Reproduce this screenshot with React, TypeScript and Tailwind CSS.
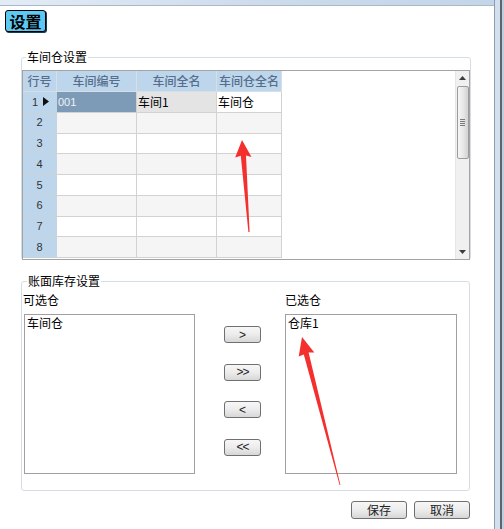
import React from 'react';

const rows = [1, 2, 3, 4, 5, 6, 7, 8];

const WinButton = ({ label, className = '' }: { label: string; className?: string }) => (
  <div
    className={`flex items-center justify-center rounded-[3px] border border-[#707070] bg-linear-to-b from-[#f7f7f7] via-[#ececec] to-[#d7d7d7] text-[12px] leading-none text-[#222] ${className}`}
  >
    {label}
  </div>
);

const Arrows = () => (
  <svg className="pointer-events-none absolute inset-0" width="504" height="529" viewBox="0 0 504 529">
    <polygon
      fill="#f4302e"
      points="242,140 251.5,157 246,155.5 249.6,232 248.4,232 240.8,155.8 235.2,157.6"
    />
    <polygon
      fill="#f4302e"
      points="302,337 314.3,352.4 308.6,352.6 340.4,485 339.6,485 303.8,354.6 298.7,356.4"
    />
  </svg>
);

const Scrollbar = () => (
  <div className="flex w-[14px] flex-col items-center border-l border-[#e6e6e6] bg-[#f0f0f0]">
    <svg className="mt-[5px]" width="7" height="4" viewBox="0 0 7 4">
      <polygon points="3.5,0 7,4 0,4" fill="#3c3c3c" />
    </svg>
    <div className="mt-[6px] flex h-[73px] w-[12px] items-center justify-center rounded-[2px] border border-[#9c9c9c] bg-linear-to-r from-[#f5f5f5] via-[#e8e8e8] to-[#d2d2d2]">
      <div className="flex flex-col gap-[1px]">
        <div className="h-px w-[5px] bg-[#7a7a7a]" />
        <div className="h-px w-[5px] bg-[#7a7a7a]" />
        <div className="h-px w-[5px] bg-[#7a7a7a]" />
        <div className="h-px w-[5px] bg-[#7a7a7a]" />
      </div>
    </div>
    <div className="flex-1" />
    <svg className="mb-[5px]" width="7" height="4" viewBox="0 0 7 4">
      <polygon points="0,0 7,0 3.5,4" fill="#3c3c3c" />
    </svg>
  </div>
);

const Grid = () => (
  <div className="flex h-[190px] w-[448px] border border-[#a3a3a3] bg-white">
    <div className="flex flex-col">
      <div className="flex h-[21px] text-[12px] font-medium text-[#566e8c]">
        <div className="flex w-[34px] items-center justify-center border-r border-b border-[#d6dfe8] bg-[#bdd6eb]">行号</div>
        <div className="flex w-[80px] items-center justify-center border-r border-b border-[#d6dfe8] bg-[#bdd6eb]">车间编号</div>
        <div className="flex w-[80px] items-center justify-center border-r border-b border-[#d6dfe8] bg-[#bdd6eb]">车间全名</div>
        <div className="flex w-[65px] items-center justify-center border-r border-b border-[#d6dfe8] bg-[#bdd6eb]">车间仓全名</div>
      </div>
      {rows.map((n) => {
        const even = n % 2 === 0;
        const rowBg = even ? 'bg-[#f5f5f5]' : 'bg-white';
        return (
          <div key={n} className="flex h-[20.75px] text-[12px]">
            <div className="flex w-[34px] items-center justify-center border-r border-b border-[#c9d3dc] bg-[#bdd6eb] font-['Liberation_Sans',sans-serif] text-[11px] text-[#333]">
              {n === 1 ? (
                <span className="flex items-center gap-[5px] pl-[2px]">
                  1
                  <svg width="6" height="9" viewBox="0 0 6 9">
                    <polygon points="0,0 6,4.5 0,9" fill="#111" />
                  </svg>
                </span>
              ) : (
                n
              )}
            </div>
            {n === 1 ? (
              <>
                <div className="flex w-[80px] items-center border-r border-b border-[#d2d2d2] bg-[#7d9bb7] pl-[1px] font-['Liberation_Sans',sans-serif] text-[11px] text-[#eef3f8]">001</div>
                <div className="flex w-[80px] items-center border-r border-b border-[#d2d2d2] bg-[#e4e4e4] pl-[1px] text-black">车间1</div>
                <div className="flex w-[65px] items-center border-r border-b border-[#d2d2d2] bg-white pl-[1px] text-black">车间仓</div>
              </>
            ) : (
              <>
                <div className={`w-[80px] border-r border-b border-[#d2d2d2] ${rowBg}`} />
                <div className={`w-[80px] border-r border-b border-[#d2d2d2] ${rowBg}`} />
                <div className={`w-[65px] border-r border-b border-[#d2d2d2] ${rowBg}`} />
              </>
            )}
          </div>
        );
      })}
    </div>
    <div className="flex-1" />
    <Scrollbar />
  </div>
);

export default function App() {
  return (
    <div className="relative flex h-[529px] w-[504px] overflow-hidden bg-white font-['Noto_Sans_CJK_SC',sans-serif] text-black">
      <div className="flex w-[494px] flex-col">
        <div className="h-[6px] border-b border-[#a9b9c8] bg-linear-to-r from-[#e3ecf6] via-[#cedcec] to-[#c3d5e8]" />
        <div className="ml-[5px] mt-[4px] flex h-[22px] w-[41px] items-center justify-center rounded-[3px] border-[1.5px] border-black bg-[#5cc9f4] text-[16px] font-bold leading-none shadow-[1px_1px_0_#1b3a4a]">
          设置
        </div>

        <div className="relative ml-[21px] mt-[25px] w-[450px] rounded-[3px] border border-[#d5dee5] pt-[12px]">
          <span className="absolute -top-[8px] left-[4px] bg-white px-[1px] text-[12px] leading-[14px]">车间仓设置</span>
          <div className="-mb-px">
            <Grid />
          </div>
        </div>

        <div className="relative ml-[21px] mt-[21px] h-[210px] w-[449px] rounded-[3px] border border-[#d5dee5]">
          <span className="absolute -top-[8px] left-[5px] bg-white px-[1px] text-[12px] leading-[14px]">账面库存设置</span>
          <div className="flex pl-[2px]">
            <div className="flex flex-col">
              <div className="-ml-[1px] mt-[11px] h-[14px] text-[12px] leading-[14px]">可选仓</div>
              <div className="mt-[7px] h-[160px] w-[171px] border border-[#a0a0a0] px-[2px] text-[12px] leading-[16px]">车间仓</div>
            </div>
            <div className="ml-[29px] mt-[44px] flex flex-col gap-[20.5px] font-['Liberation_Sans',sans-serif]">
              <WinButton label=">" className="h-[17px] w-[37px] text-[11px]" />
              <WinButton label=">>" className="h-[17px] w-[37px] text-[11px] tracking-[-1px]" />
              <WinButton label="<" className="h-[17px] w-[37px] text-[11px]" />
              <WinButton label="<<" className="h-[17px] w-[37px] text-[11px] tracking-[-1px]" />
            </div>
            <div className="ml-[24px] flex flex-col">
              <div className="mt-[11px] h-[14px] text-[12px] leading-[14px]">已选仓</div>
              <div className="mt-[7px] h-[160px] w-[172px] border border-[#a0a0a0] px-[2px] text-[12px] leading-[16px]">仓库1</div>
            </div>
          </div>
        </div>

        <div className="mt-[10px] flex justify-end gap-[7px] pr-[24px]">
          <WinButton label="保存" className="h-[18px] w-[56px]" />
          <WinButton label="取消" className="h-[18px] w-[56px]" />
        </div>
      </div>
      <div className="flex flex-1">
        <div className="w-px bg-[#8e9cab]" />
        <div className="w-[5px] bg-[#d2dfed]" />
        <div className="w-[2px] bg-[#5f636a]" />
        <div className="flex-1 bg-[#bcd0e4]" />
      </div>
      <Arrows />
    </div>
  );
}
